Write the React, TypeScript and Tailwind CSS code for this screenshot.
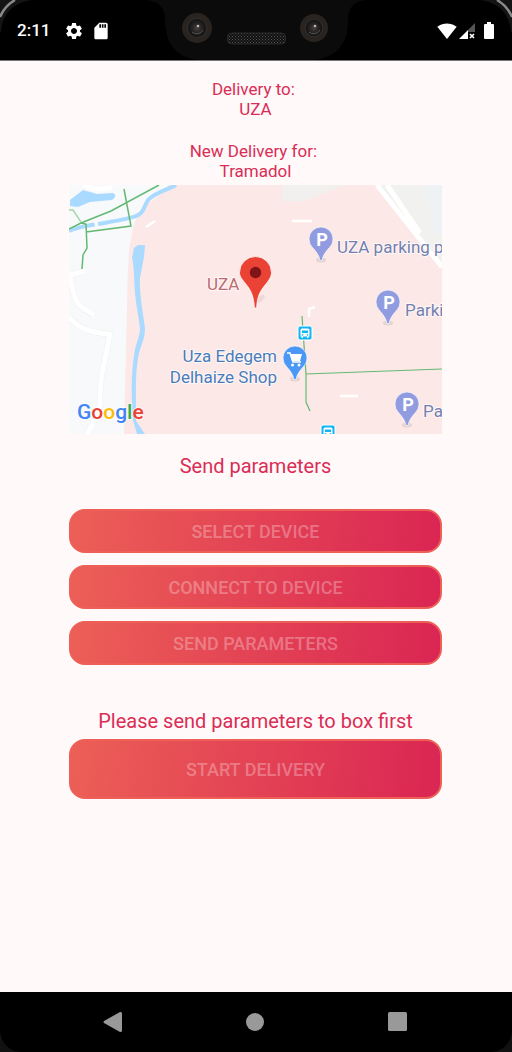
import type { ReactNode } from "react";
import { MdSdCard, MdSettings, MdSignalWifi4Bar } from "react-icons/md";

function Notch() {
  const lenses = [
    { x: 52, y: 28, r: 15 },
    { x: 169, y: 28, r: 14 },
  ];
  return (
    <svg className="h-15 w-[222px] shrink-0" viewBox="0 0 222 60" aria-hidden="true">
      <defs>
        <pattern id="mesh" width="3" height="3" patternUnits="userSpaceOnUse">
          <rect width="3" height="3" fill="#111" />
          <rect width="1" height="1" fill="#555" />
          <rect x="1.5" y="1.5" width="1" height="1" fill="#484848" />
        </pattern>
        <radialGradient id="lens">
          <stop offset="0" stopColor="#4a4242" />
          <stop offset="0.5" stopColor="#252323" />
          <stop offset="0.85" stopColor="#151515" />
          <stop offset="1" stopColor="#3a3936" />
        </radialGradient>
      </defs>
      <path d="M0 0C14 1 20 7 20 20C20 44 32 60 58 60H164C190 60 203 44 203 22C203 8 208 1 222 0Z" fill="#0b0b0b" />
      {lenses.map((l) => (
        <g key={l.x}>
          <circle cx={l.x} cy={l.y} r={l.r} fill="#29241f" />
          <circle cx={l.x} cy={l.y} r={l.r - 5} fill="url(#lens)" />
          <path d={`M${l.x - 5} ${l.y + 4}a7 7 0 0 0 11 -2`} fill="none" stroke="#55504e" strokeWidth="1" />
          <circle cx={l.x + 1} cy={l.y - 2} r="1.3" fill="#c9b0b0" />
        </g>
      ))}
      <rect x="82.500" y="33" width="58" height="11" rx="4" fill="url(#mesh)" stroke="#2a2a2a" />
    </svg>
  );
}

function StatusBar() {
  return (
    <header className="relative flex h-[61px] items-start justify-between border-b border-[#777] bg-black text-white">
      <svg className="absolute top-0 left-0 h-8 w-8" viewBox="0 0 32 32" aria-hidden="true">
        <path d="M0 0H32C14 2 2 14 1 32H0Z" fill="#141414" />
        <path d="M0 17C3 10 8 4 15 0" fill="none" stroke="#8a8a8a" strokeWidth="2.500" />
      </svg>
      <svg className="absolute top-0 right-0 h-8 w-8" viewBox="0 0 32 32" aria-hidden="true">
        <path d="M32 0H0C18 2 30 14 31 32H32Z" fill="#141414" />
        <path d="M32 17C29 10 24 4 17 0" fill="none" stroke="#8a8a8a" strokeWidth="2.500" />
      </svg>
      <div className="flex h-15 flex-1 items-center pt-px pl-[17px]">
        <span className="w-[47px] text-[17px] font-medium">2:11</span>
        <MdSettings className="size-5" />
        <MdSdCard className="ml-[7px] size-5" />
      </div>
      <Notch />
      <div className="flex h-15 flex-1 items-center justify-end gap-[2px] pt-px pr-[18px]">
        <MdSignalWifi4Bar className="size-5" />
        <svg className="h-4 w-4" viewBox="0 0 16 16" aria-hidden="true">
          <path d="M16 0V9H9V7Z" fill="#555" />
          <path d="M9 7V16H0Z" fill="#fff" />
          <path d="M11 11l4 4M15 11l-4 4" stroke="#fff" strokeWidth="1.600" />
        </svg>
        <svg className="ml-[7px] h-[17px] w-[10px]" viewBox="0 0 10 17" aria-hidden="true">
          <path d="M3 0H7V2H9Q10 2 10 3V16Q10 17 9 17H1Q0 17 0 16V3Q0 2 1 2H3Z" fill="#fff" />
        </svg>
      </div>
    </header>
  );
}

function Pin({ x, y, fill, children }: { x: number; y: number; fill: string; children: ReactNode }) {
  return (
    <g transform={`translate(${x} ${y})`}>
      <ellipse cx="0" cy="20" rx="5" ry="2.500" fill="#e6d3d2" />
      <path
        d="M-1 20.500C-2 15-5 11.500-8.500 7.500A12 12 0 1 1 8.500 7.500C5 11.500 2 15 1 20.500Z"
        fill={fill}
        stroke="#fff"
        strokeOpacity="0.8"
        strokeWidth="0.800"
      />
      {children}
    </g>
  );
}

function BusStop({ x, y }: { x: number; y: number }) {
  return (
    <g transform={`translate(${x} ${y})`}>
      <rect x="-7" y="-7" width="14" height="14" rx="2" fill="#12b5f5" stroke="#fff" />
      <path d="M-4.500 -3Q-4.500 -4.500 -3 -4.500H3Q4.500 -4.500 4.500 -3V3.500H3.500V5H2V3.500H-2V5H-3.500V3.500H-4.500Z" fill="#fff" />
      <path d="M-3 -2.500H3V0H-3Z" fill="#12b5f5" />
      <circle cx="-2.500" cy="1.900" r="0.800" fill="#12b5f5" />
      <circle cx="2.500" cy="1.900" r="0.800" fill="#12b5f5" />
    </g>
  );
}

const parkingPins = [
  { x: 252, y: 55 },
  { x: 319, y: 118 },
  { x: 338, y: 220 },
];

function DeliveryMap() {
  return (
    <svg className="block w-full" viewBox="0 0 373 249" role="img" aria-label="Map of UZA">
      <rect width="373" height="249" fill="#f8f9fa" />
      <path d="M99 0C94 8 84 15 78 19C70 28 66 35 64 43L60 66Q58 95 58 125L55 249H373V0Z" fill="#fce8e6" />
      <path d="M309 0H373V80Z" fill="#f1f1ef" />
      <path d="M356 0H373V50H366Z" fill="#eff2f4" />
      <path d="M212 0H276L236 16H213Z" fill="#f1f0ee" />

      <path
        d="M0 46C8 42 18 41 28 39M29 39C46 36 60 34 67 31C76 28 75 19 80 14C88 7 98 5 107 0"
        fill="none"
        stroke="#aadaff"
        strokeWidth="4"
      />
      <path d="M26 36l2 6" stroke="#f8f9fa" strokeWidth="3" />
      <path d="M1 15L14 5L28 9L44 8Q49 11 43 15L21 17L9 22L1 21Z" fill="#aadaff" />
      <path
        d="M65 63L69 60L76 60L75 72L71 93C70 107 74 128 76 143C76 153 73 158 70 168C66 187 67 207 67 236L76 249H68L64 235C62 207 62 187 66 164C69 154 71 148 71 144C70 132 67 121 66 108C65 91 65 80 63 73Z"
        fill="#aadaff"
      />

      <path
        d="M15 86L1 90Q4 114 11 121L24 130M0 132C10 144 22 148 41 149C36 177 30 192 31 220Q27 235 18 249"
        fill="none"
        stroke="#eef0f1"
        strokeWidth="6"
        strokeLinejoin="round"
      />
      <g fill="none" stroke="#fff" strokeWidth="5" strokeLinejoin="round">
        <path d="M16 86L1 90Q4 114 11 121L25 130M0 132C10 144 22 148 41 149C36 177 30 192 31 220Q27 235 18 249" />
        <path d="M15 0Q26 7 43 2M308 0L373 82M318 0L351 48" />
      </g>
      <g fill="none" stroke="#fff" strokeWidth="2.500">
        <path d="M77 42L86 36M223 36H243M240 132V124L246 122M271 211H289" />
      </g>

      <g fill="none" stroke="#63b973" strokeWidth="1.500">
        <path d="M0 44L12 38L42 26L90 0M55 4L62 41L17 47M12 38L17 39L18 63L14 70L13 84" />
        <path d="M0 25H4L12 37" stroke="#a6d8ae" />
        <path d="M233 131L237 189L373 184M237 188V217L241 226" strokeWidth="1.200" />
      </g>

      {parkingPins.map((p) => (
        <Pin key={p.y} x={p.x} y={p.y} fill="#909be0">
          <text x="1" y="6" textAnchor="middle" fontSize="18" fontWeight="700" fill="#fff">
            P
          </text>
        </Pin>
      ))}
      <Pin x={226} y={174} fill="#4a97f5">
        <path d="M-8 -6H-5L-2 3H6" fill="none" stroke="#fff" strokeWidth="1.500" />
        <path d="M-5 -5H7L5 2H-3Z" fill="#fff" />
        <circle cx="-2.500" cy="6" r="1.500" fill="#fff" />
        <circle cx="4" cy="6" r="1.500" fill="#fff" />
      </Pin>
      <BusStop x={236} y={148} />
      <BusStop x={259} y={247} />

      <g fontSize="17" stroke="#fff" strokeOpacity="0.700" strokeWidth="2" strokeLinejoin="round" paintOrder="stroke">
        <g fill="#7580b0">
          <text x="268" y="68">UZA parking p</text>
          <text x="336" y="131">Parki</text>
          <text x="354" y="232">Pa</text>
        </g>
        <text x="138" y="105" fill="#b96b6f">UZA</text>
        <g fill="#4a7cbb" textAnchor="end">
          <text x="208" y="177">Uza Edegem</text>
          <text x="208" y="198">Delhaize Shop</text>
        </g>
      </g>
      <text x="8" y="234" fontSize="21" fontWeight="500" stroke="#fff" strokeWidth="2" strokeOpacity="0.500" paintOrder="stroke">
        <tspan fill="#4285f4">G</tspan>
        <tspan fill="#ea4335">o</tspan>
        <tspan fill="#fbbc05">o</tspan>
        <tspan fill="#4285f4">g</tspan>
        <tspan fill="#34a853">l</tspan>
        <tspan fill="#ea4335">e</tspan>
      </text>

      <ellipse cx="191" cy="114" rx="6" ry="2.500" transform="rotate(-40 191 114)" fill="#eed9d7" />
      <path
        d="M185.300 123C185 112 182 105 176 98C172 93 170.500 91 170.500 87.500A16 16 0 1 1 202.500 87.500C202.500 91 201 94 197 99C191 106 188 112 187.700 123Z"
        fill="#ea4335"
        stroke="#fff"
        strokeWidth="0.800"
      />
      <circle cx="186.500" cy="87.500" r="5.700" fill="#7f1518" />
    </svg>
  );
}

function ActionButton({ tall = false, children }: { tall?: boolean; children: ReactNode }) {
  return (
    <button
      type="button"
      disabled
      className={`w-full rounded-2xl border-2 border-[#ee6057] bg-linear-[98deg] from-[#ec6056] to-[#da2553] bg-origin-border pt-[2px] text-lg leading-5 font-medium text-white/30 uppercase ${
        tall ? "h-15" : "h-11"
      }`}
    >
      {children}
    </button>
  );
}

function NavigationBar() {
  return (
    <nav className="relative flex h-15 items-center bg-black pr-[6px] pl-1" aria-label="System navigation">
      <svg className="absolute bottom-0 left-0 size-5" viewBox="0 0 20 20" aria-hidden="true">
        <path d="M0 0Q3 18 20 20H0Z" fill="#111" />
      </svg>
      <svg className="absolute right-0 bottom-0 size-5" viewBox="0 0 20 20" aria-hidden="true">
        <path d="M20 0Q17 18 0 20H20Z" fill="#111" />
      </svg>
      <div className="flex flex-1 items-center justify-between px-[98px]">
        <button type="button" aria-label="Back">
          <svg className="block size-5" viewBox="0 0 20 20">
            <path d="M2 9Q1 10 2 11L18 20Q20 20 20 19V1Q20 0 18 0Z" fill="#999" />
          </svg>
        </button>
        <button type="button" aria-label="Home">
          <svg className="block size-5" viewBox="0 0 20 20">
            <circle cx="10" cy="10" r="9" fill="#999" />
          </svg>
        </button>
        <button type="button" aria-label="Overview">
          <svg className="block size-5" viewBox="0 0 20 20">
            <rect width="19" height="19" rx="1.500" fill="#999" />
          </svg>
        </button>
      </div>
    </nav>
  );
}

export default function App() {
  return (
    <div className="flex min-h-screen flex-col bg-[#fff9f9] font-[Roboto,sans-serif]">
      <StatusBar />
      <main className="flex-1 pt-[18px] pr-[70px] pl-[69px] text-center text-[#da2d56]">
        <p className="text-[17px] leading-5">
          Delivery to:&nbsp;
          <br />
          UZA
        </p>
        <p className="mt-[22px] mb-1 text-[17px] leading-5">
          New Delivery for:&nbsp;
          <br />
          Tramadol
        </p>
        <DeliveryMap />
        <h2 className="mt-5 text-xl leading-6">Send parameters</h2>
        <div className="mt-[31px] flex flex-col gap-3">
          <ActionButton>Select device</ActionButton>
          <ActionButton>Connect to device</ActionButton>
          <ActionButton>Send parameters</ActionButton>
        </div>
        <p className="mt-11 mb-[6px] text-xl leading-6">Please send parameters to box first</p>
        <ActionButton tall>Start delivery</ActionButton>
      </main>
      <NavigationBar />
    </div>
  );
}
